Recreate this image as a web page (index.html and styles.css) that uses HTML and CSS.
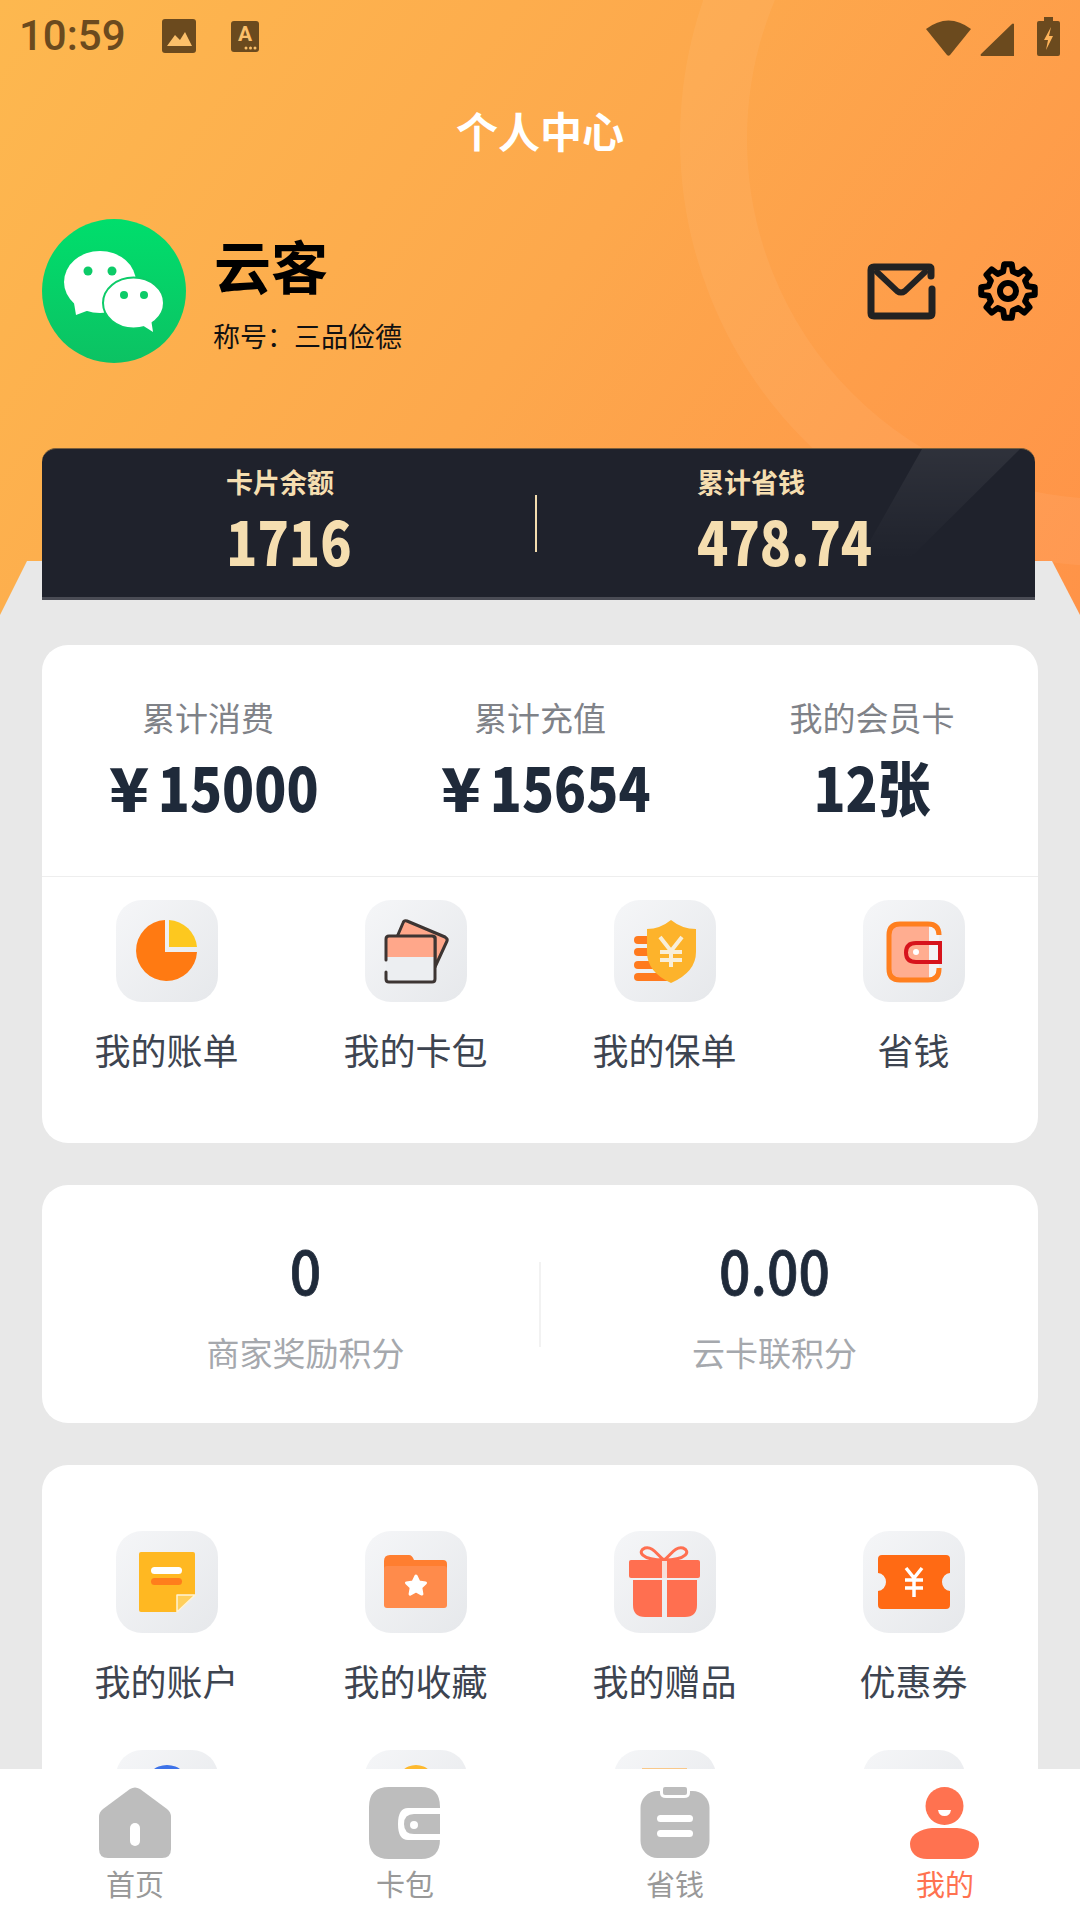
FILE: index.html
```html
<!DOCTYPE html>
<html lang="zh-CN">
<head>
<meta charset="utf-8">
<title>个人中心</title>
<link rel="stylesheet" href="styles.css">
</head>
<body>
<div class="page">
  <header class="hero">
    <div class="status">
      <span class="time">10:59</span>
      <svg class="st-img" viewBox="0 0 34 34"><rect width="34" height="34" rx="3" fill="#6b4a1e"/><path d="M5 27 L13 16 L18 21 L23 13 L30 27 Z" fill="#fcc06a"/></svg>
      <svg class="st-a" viewBox="0 0 28 31"><rect width="28" height="31" rx="3" fill="#6b4a1e"/><text x="14" y="20" text-anchor="middle" class="st-a-text">A</text><circle cx="15" cy="27" r="1.5" fill="#fcc06a"/><circle cx="19.500" cy="27" r="1.500" fill="#fcc06a"/><circle cx="24" cy="27" r="1.500" fill="#fcc06a"/></svg>
      <div class="status-right">
        <svg class="st-wifi" viewBox="0 0 45 36"><path d="M0 9 Q22.500 -8 45 9 L24 35 Q22.500 36.500 21 35 Z" fill="#6b4a1e"/></svg>
        <svg class="st-signal" viewBox="0 0 34 33"><path d="M34 1 V33 H1 Q0 32 1 31 L32 1 Q33 0 34 1 Z" fill="#6b4a1e"/></svg>
        <svg class="st-batt" viewBox="0 0 23 39"><path d="M7 0 H16 V4 H21 Q23 4 23 6 V37 Q23 39 21 39 H2 Q0 39 0 37 V6 Q0 4 2 4 H7 Z" fill="#6b4a1e"/><path d="M14 10 L7 23 H11 L9 33 L16 19 H12 Z" fill="#ffb45a"/></svg>
      </div>
    </div>
    <h1 class="title">个人中心</h1>
    <div class="profile">
      <svg class="avatar" viewBox="0 0 144 144">
        <defs><linearGradient id="wx" x1="0" y1="0" x2="0" y2="1"><stop offset="0" stop-color="#00de6c"/><stop offset="1" stop-color="#0cc263"/></linearGradient></defs>
        <circle cx="72" cy="72" r="72" fill="url(#wx)"/>
        <ellipse cx="58" cy="63" rx="36" ry="31" fill="#fff"/>
        <path d="M32 84 L34 96 L50 90 Z" fill="#fff"/>
        <ellipse cx="91.500" cy="84" rx="30.500" ry="25.500" fill="#fff" stroke="#0ccb68" stroke-width="2"/>
        <path d="M100 106 L111 113 L109 100 Z" fill="#fff"/>
        <circle cx="46" cy="52" r="4.500" fill="#0ccb68"/><circle cx="70" cy="52" r="4.500" fill="#0ccb68"/>
        <circle cx="82" cy="76" r="4" fill="#0ccb68"/><circle cx="102" cy="76" r="4" fill="#0ccb68"/>
      </svg>
      <div class="who">
        <div class="name">云客</div>
        <div class="rank">称号：三品俭德</div>
      </div>
      <div class="actions">
        <svg class="mail" viewBox="0 0 69 57"><path d="M64 13 V6 Q64 4 62 4 H7 Q4 4 4 7 V50 Q4 53 7 53 H62 Q65 53 65 50 V26" fill="none" stroke="#222" stroke-width="7" stroke-linecap="round"/><path d="M10 9 L30 28 Q34 31 38 28 L58 9" fill="none" stroke="#222" stroke-width="6" stroke-linecap="round"/></svg>
        <svg class="gear" viewBox="0 0 60 60"><path d="M25.160 10.600 L26.240 3.260 H33.760 L34.840 10.600 L40.300 12.860 L46.250 8.440 L51.560 13.750 L47.140 19.700 L49.400 25.160 L56.740 26.240 V33.760 L49.400 34.840 L47.140 40.300 L51.560 46.250 L46.250 51.560 L40.300 47.140 L34.840 49.400 L33.760 56.740 H26.240 L25.160 49.400 L19.700 47.140 L13.750 51.560 L8.440 46.250 L12.860 40.300 L10.600 34.840 L3.260 33.760 V26.240 L10.600 25.160 L12.860 19.700 L8.440 13.750 L13.750 8.440 L19.700 12.860 Z" fill="none" stroke="#000" stroke-width="6" stroke-linejoin="round"/><circle cx="30" cy="30" r="8" fill="none" stroke="#000" stroke-width="6"/></svg>
      </div>
    </div>
    <div class="balance">
      <div class="bal-col bal-left">
        <div class="bal-label">卡片余额</div>
        <div class="bal-value">1716</div>
      </div>
      <div class="bal-div"></div>
      <div class="bal-col bal-right">
        <div class="bal-label">累计省钱</div>
        <div class="bal-value">478.74</div>
      </div>
    </div>
  </header>

  <main class="main">
    <section class="card">
      <div class="stats">
        <div class="stat"><div class="stat-label">累计消费</div><div class="stat-value money"><span class="yen">¥</span>15000</div></div>
        <div class="stat"><div class="stat-label">累计充值</div><div class="stat-value money"><span class="yen">¥</span>15654</div></div>
        <div class="stat"><div class="stat-label">我的会员卡</div><div class="stat-value">12张</div></div>
      </div>
      <div class="menu menu-first">
        <div class="item"><div class="tile"><svg class="ico" viewBox="0 0 102 102"><path d="M49 20 V52 H81 A30.500 30.500 0 1 1 49 20 Z" fill="#ff7a12"/><path d="M53 20 A30 30 0 0 1 81 47 H53 Z" fill="#fdc81f"/></svg></div><div class="item-label">我的账单</div></div>
        <div class="item"><div class="tile"><svg class="ico" viewBox="0 0 102 102"><path d="M32 37 L38 23 Q39 20 42 21 L80 37 Q83 39 82 41 L70 67 V37 Z" fill="#ffa78a" stroke="#3d3533" stroke-width="3" stroke-linejoin="round"/><rect x="21" y="36" width="49" height="46" rx="3" fill="#eceef1"/><path d="M21 57 V39 Q21 36 24 36 H67 Q70 36 70 39 V57 Z" fill="#ffa78a"/><path d="M21 60 V39 Q21 36 24 36 H67 Q70 36 70 39 V79 Q70 82 67 82 H24 Q21 82 21 79 V72" fill="none" stroke="#3d3533" stroke-width="3" stroke-linecap="round"/></svg></div><div class="item-label">我的卡包</div></div>
        <div class="item"><div class="tile"><svg class="ico" viewBox="0 0 102 102"><rect x="20" y="36" width="30" height="8" rx="4" fill="#ff7a1e"/><rect x="20" y="48" width="30" height="8" rx="4" fill="#ff7a1e"/><rect x="20" y="61" width="30" height="8" rx="4" fill="#ff7a1e"/><rect x="20" y="73" width="38" height="8" rx="4" fill="#ff7a1e"/><path d="M57 20 Q68 29 82 29 V52 Q82 72 57 83 Q33 72 33 52 V29 Q46 29 57 20 Z" fill="#fdb32b"/><path d="M46 37 L57 51 L68 37 M57 51 V67 M46 52 H68 M46 60 H68" fill="none" stroke="#f8eed8" stroke-width="4"/></svg></div><div class="item-label">我的保单</div></div>
        <div class="item"><div class="tile"><svg class="ico" viewBox="0 0 102 102"><rect x="26" y="24" width="50" height="56" rx="11" fill="#ffad90"/><rect x="66" y="26" width="10" height="52" fill="#f4f4f6"/><path d="M76 34 V35 Q76 24 65 24 H37 Q26 24 26 35 V69 Q26 80 37 80 H65 Q76 80 76 69 V68" fill="none" stroke="#ff7f1f" stroke-width="5"/><path d="M77 43 H53 Q43 43 43 52.500 Q43 62 53 62 H77 Z" fill="#ffad90" stroke="#d7141c" stroke-width="4"/><rect x="66" y="45" width="9" height="15" fill="#f4f4f6"/><circle cx="53" cy="52" r="3" fill="#fff"/></svg></div><div class="item-label">省钱</div></div>
      </div>
    </section>

    <section class="card points">
      <div class="pt"><div class="pt-value">0</div><div class="pt-label">商家奖励积分</div></div>
      <div class="pt-div"></div>
      <div class="pt"><div class="pt-value">0.00</div><div class="pt-label">云卡联积分</div></div>
    </section>

    <section class="card card-last">
      <div class="menu">
        <div class="item"><div class="tile"><svg class="ico" viewBox="0 0 102 102"><path d="M23 23 Q23 21 25 21 H77 Q79 21 79 23 V64 L61 81 H25 Q23 81 23 79 Z" fill="#ffb822"/><path d="M61 81 V64 H79 Z" fill="#ffcf5c" stroke="#fff3d6" stroke-width="1.500" stroke-linejoin="round"/><rect x="35" y="36" width="31" height="7" rx="3.500" fill="#fff"/><rect x="35" y="47" width="31" height="7" rx="3.500" fill="#ff7e1c"/></svg></div><div class="item-label">我的账户</div></div>
        <div class="item"><div class="tile"><svg class="ico" viewBox="0 0 102 102"><path d="M19 30 Q19 24 25 24 H44 Q47 24 49 29 H78 Q82 29 82 33 V40 H19 Z" fill="#ff7e30"/><rect x="19" y="35" width="63" height="42" rx="3" fill="#ff8b4b"/><path d="M51 45 L53.900 51 L60.500 51.900 L55.800 56.500 L56.900 63.100 L51 60 L45.100 63.100 L46.200 56.500 L41.500 51.900 L48.100 51 Z" fill="#fff" stroke="#fff" stroke-width="3" stroke-linejoin="round"/></svg></div><div class="item-label">我的收藏</div></div>
        <div class="item"><div class="tile"><svg class="ico" viewBox="0 0 102 102"><path d="M50 29 C43 24 39 15 31 17 C23 20 27 29 50 29 C73 29 77 20 69 17 C61 15 57 24 50 29 Z" fill="none" stroke="#ff6f50" stroke-width="3"/><rect x="15" y="29" width="71" height="18" rx="2" fill="#ff6f50"/><path d="M19 49 H48 V86 H31 Q19 86 19 74 Z M53 49 H83 V74 Q83 86 71 86 H53 Z" fill="#ff6f50"/><rect x="48" y="30" width="5" height="17" fill="#f6dfd9"/></svg></div><div class="item-label">我的赠品</div></div>
        <div class="item"><div class="tile"><svg class="ico" viewBox="0 0 102 102"><path d="M19 24 H83 Q87 24 87 28 V42 A8 9 0 0 0 87 60 V74 Q87 78 83 78 H19 Q15 78 15 74 V60 A8 9 0 0 0 15 42 V28 Q15 24 19 24 Z" fill="#ff6a14"/><path d="M43 37 L51 47 L59 37 M51 47 V66 M42 49 H60 M42 57 H60" fill="none" stroke="#fff" stroke-width="3.500"/></svg></div><div class="item-label">优惠券</div></div>
        <div class="item"><div class="tile"><svg class="ico" viewBox="0 0 102 102"><ellipse cx="51" cy="36" rx="22" ry="21" fill="#3d72e8"/></svg></div></div>
        <div class="item"><div class="tile"><svg class="ico" viewBox="0 0 102 102"><ellipse cx="51" cy="36" rx="20" ry="21" fill="#fdb92e"/></svg></div></div>
        <div class="item"><div class="tile"><svg class="ico" viewBox="0 0 102 102"><rect x="28" y="18" width="45" height="40" fill="#f8c88a"/></svg></div></div>
        <div class="item"><div class="tile"></div></div>
      </div>
    </section>
  </main>

  <nav class="tabs">
    <div class="tab"><svg class="tab-ico" viewBox="0 0 72 72"><path d="M31 2 Q36 -1 41 2 L68 22 Q72 25 72 30 V62 Q72 71 63 71 H9 Q0 71 0 62 V30 Q0 25 4 22 Z" fill="#bdbdbd"/><rect x="31" y="36" width="10" height="23" rx="5" fill="#fff"/></svg><div class="tab-label">首页</div></div>
    <div class="tab"><svg class="tab-ico" viewBox="0 0 72 72"><path d="M20 0 H52 Q71 0 71 20 V21 H39 Q29 21 29 37 Q29 53 39 53 H71 V52 Q71 72 52 72 H20 Q0 72 0 52 V20 Q0 0 20 0 Z" fill="#bdbdbd"/><path d="M71 27 H45 Q35 27 35 37 Q35 47 45 47 H71 Z" fill="#bdbdbd"/><circle cx="45" cy="38" r="4" fill="#fff"/></svg><div class="tab-label">卡包</div></div>
    <div class="tab"><svg class="tab-ico" viewBox="0 0 72 72"><rect x="1.500" y="4" width="69" height="67" rx="17" fill="#bdbdbd"/><path d="M21 0 V6 Q21 11 27 11 H45 Q51 11 51 6 V0 Z" fill="#fff"/><rect x="24" y="0" width="24" height="8" rx="2" fill="#bdbdbd"/><rect x="18" y="28" width="36" height="7" rx="3.500" fill="#fff"/><rect x="18" y="43" width="36" height="7" rx="3.500" fill="#fff"/></svg><div class="tab-label">省钱</div></div>
    <div class="tab tab-on"><svg class="tab-ico" viewBox="0 0 72 72"><circle cx="35.500" cy="19" r="19" fill="#ff7250"/><path d="M29 23 H42 Q41 29 35.500 29 Q30 29 29 23 Z" fill="#fff"/><path d="M1 57 C1 46 15 41 25 41 H46 C56 41 70 46 70 57 C70 66 63 72 53 72 H18 C8 72 1 66 1 57 Z" fill="#ff7250"/></svg><div class="tab-label">我的</div></div>
  </nav>
</div>
</body>
</html>
```

FILE: styles.css
```css
* { box-sizing: border-box; }
html, body { margin: 0; padding: 0; }
body { font-family: "Noto Sans CJK SC", "Noto Sans", sans-serif; background: #e8e8e8; }

.page { width: 1080px; height: 1920px; display: flex; flex-direction: column; overflow: hidden; }

/* hero */
.hero {
  position: relative; height: 615px; flex: none; overflow: hidden;
  display: flex; flex-direction: column;
  background: linear-gradient(125deg, #fdb84f 0%, #fda84c 50%, #ff9348 100%);
}
.hero::before {
  content: ""; position: absolute; left: 680px; top: -288px; width: 720px; height: 720px;
  border-radius: 50%; border: 67px solid rgba(255, 255, 255, 0.055);
}
.hero::after {
  content: ""; position: absolute; left: 0; right: 0; bottom: 0; height: 54px; background: #e8e8e8;
  clip-path: polygon(27px 0, 1052px 0, 100% 100%, 0 100%);
}

.status { position: relative; height: 72px; flex: none; display: flex; align-items: center; padding: 0 20px 0 19px; }
.time { font-family: Roboto, sans-serif; font-size: 42px; font-weight: 500; line-height: 72px; color: #6b4a1e; width: 143px; }
.st-img { width: 34px; height: 34px; margin-right: 35px; }
.st-a { width: 28px; height: 31px; }
.st-a-text { font-family: Roboto, sans-serif; font-weight: 700; font-size: 21px; fill: #fcc06a; }
.status-right { margin-left: auto; display: flex; align-items: flex-end; gap: 9px; height: 39px; }
.st-wifi { width: 45px; height: 36px; }
.st-signal { width: 34px; height: 33px; margin-right: 14px; }
.st-batt { width: 23px; height: 39px; }

.title { position: relative; margin: 30px 0 0; height: 56px; text-align: center; font-size: 42px; line-height: 56px; font-weight: 700; color: #fff; }

.profile { position: relative; margin-top: 61px; padding: 0 42px; display: flex; align-items: center; }
.avatar { width: 144px; height: 144px; flex: none; }
.who { margin-left: 28px; }
.name { font-size: 57px; line-height: 70px; font-weight: 700; color: #000; margin-top: 3px; }
.rank { font-size: 27px; line-height: 40px; color: #111; margin-top: 17px; margin-left: -1px; }
.actions { margin-left: auto; display: flex; align-items: center; gap: 42px; }
.mail { width: 69px; height: 57px; }
.gear { width: 60px; height: 60px; }

.balance {
  position: absolute; z-index: 1; left: 42px; top: 448px; width: 993px; height: 152px;
  display: flex; background: #1f222c; border-top: 1px solid #7c5f3c; border-bottom: 3px solid #4a4c55; border-radius: 14px 14px 0 0;
  overflow: hidden;
}
.balance::before {
  content: ""; position: absolute; inset: 0;
  background: linear-gradient(180deg, rgba(255, 255, 255, 0.07), rgba(255, 255, 255, 0) 75%);
  clip-path: polygon(880px 0, 978px 0, 862px 115px, 815px 115px);
}
.bal-col { position: relative; padding-top: 16px; }
.bal-left { width: 493px; padding-left: 184px; }
.bal-right { padding-left: 160px; flex: 1; }
.bal-div { width: 2px; height: 57px; margin-top: 46px; background: #f3dcae; flex: none; }
.bal-label { font-size: 27px; line-height: 34px; font-weight: 700; color: #f5deb0; }
.bal-value { font-size: 60px; line-height: 46px; margin-top: 18px; font-weight: 900; color: #f5deb0; transform: scaleX(0.86); transform-origin: left center; }

/* main */
.main { flex: 1; min-height: 0; overflow: hidden; padding: 30px 42px 0; display: flex; flex-direction: column; gap: 42px; background: #e8e8e8; }
.card { flex: none; background: #fff; border-radius: 26px; }

.stats { height: 232px; padding-top: 50px; display: grid; grid-template-columns: repeat(3, 1fr); border-bottom: 1px solid #eeeeee; text-align: center; }
.stat-label { font-size: 33px; line-height: 44px; color: #7f8288; }
.stat-value { font-size: 60px; line-height: 64px; margin-top: 15px; font-weight: 900; color: #1f2a3a; transform: scaleX(0.88); }
.money { padding-left: 18px; }
.yen { display: inline-block; margin-right: 14px; transform: scaleX(1.25); }

.menu { display: grid; grid-template-columns: repeat(4, 1fr); row-gap: 45px; padding: 66px 0 69px; }
.menu-first { padding-top: 23px; }
.item { display: flex; flex-direction: column; align-items: center; }
.tile { width: 102px; height: 102px; border-radius: 26px; background: linear-gradient(135deg, #f5f6f8, #e6e8eb); overflow: hidden; }
.ico { display: block; width: 102px; height: 102px; }
.item-label { margin-top: 22px; font-size: 36px; line-height: 50px; color: #3d4450; }

.points { height: 238px; padding: 52px 30px 0; display: flex; }
.pt { flex: 1; text-align: center; }
.pt-div { width: 2px; height: 85px; margin-top: 25px; background: #f2f2f2; flex: none; }
.pt-value { font-size: 60px; line-height: 64px; font-weight: 500; -webkit-text-stroke: 0.8px #1f2a3a; color: #1f2a3a; transform: scaleX(0.92); }
.pt-label { margin-top: 29px; font-size: 33px; line-height: 44px; color: #a5a8ad; }

/* tabs */
.tabs { height: 151px; flex: none; background: #fff; display: grid; grid-template-columns: repeat(4, 1fr); padding-top: 18px; }
.tab { display: flex; flex-direction: column; align-items: center; }
.tab-ico { width: 72px; height: 72px; display: block; }
.tab-label { margin-top: 4px; font-size: 29px; line-height: 40px; color: #999999; }
.tab-on .tab-label { color: #ff7250; }
```
